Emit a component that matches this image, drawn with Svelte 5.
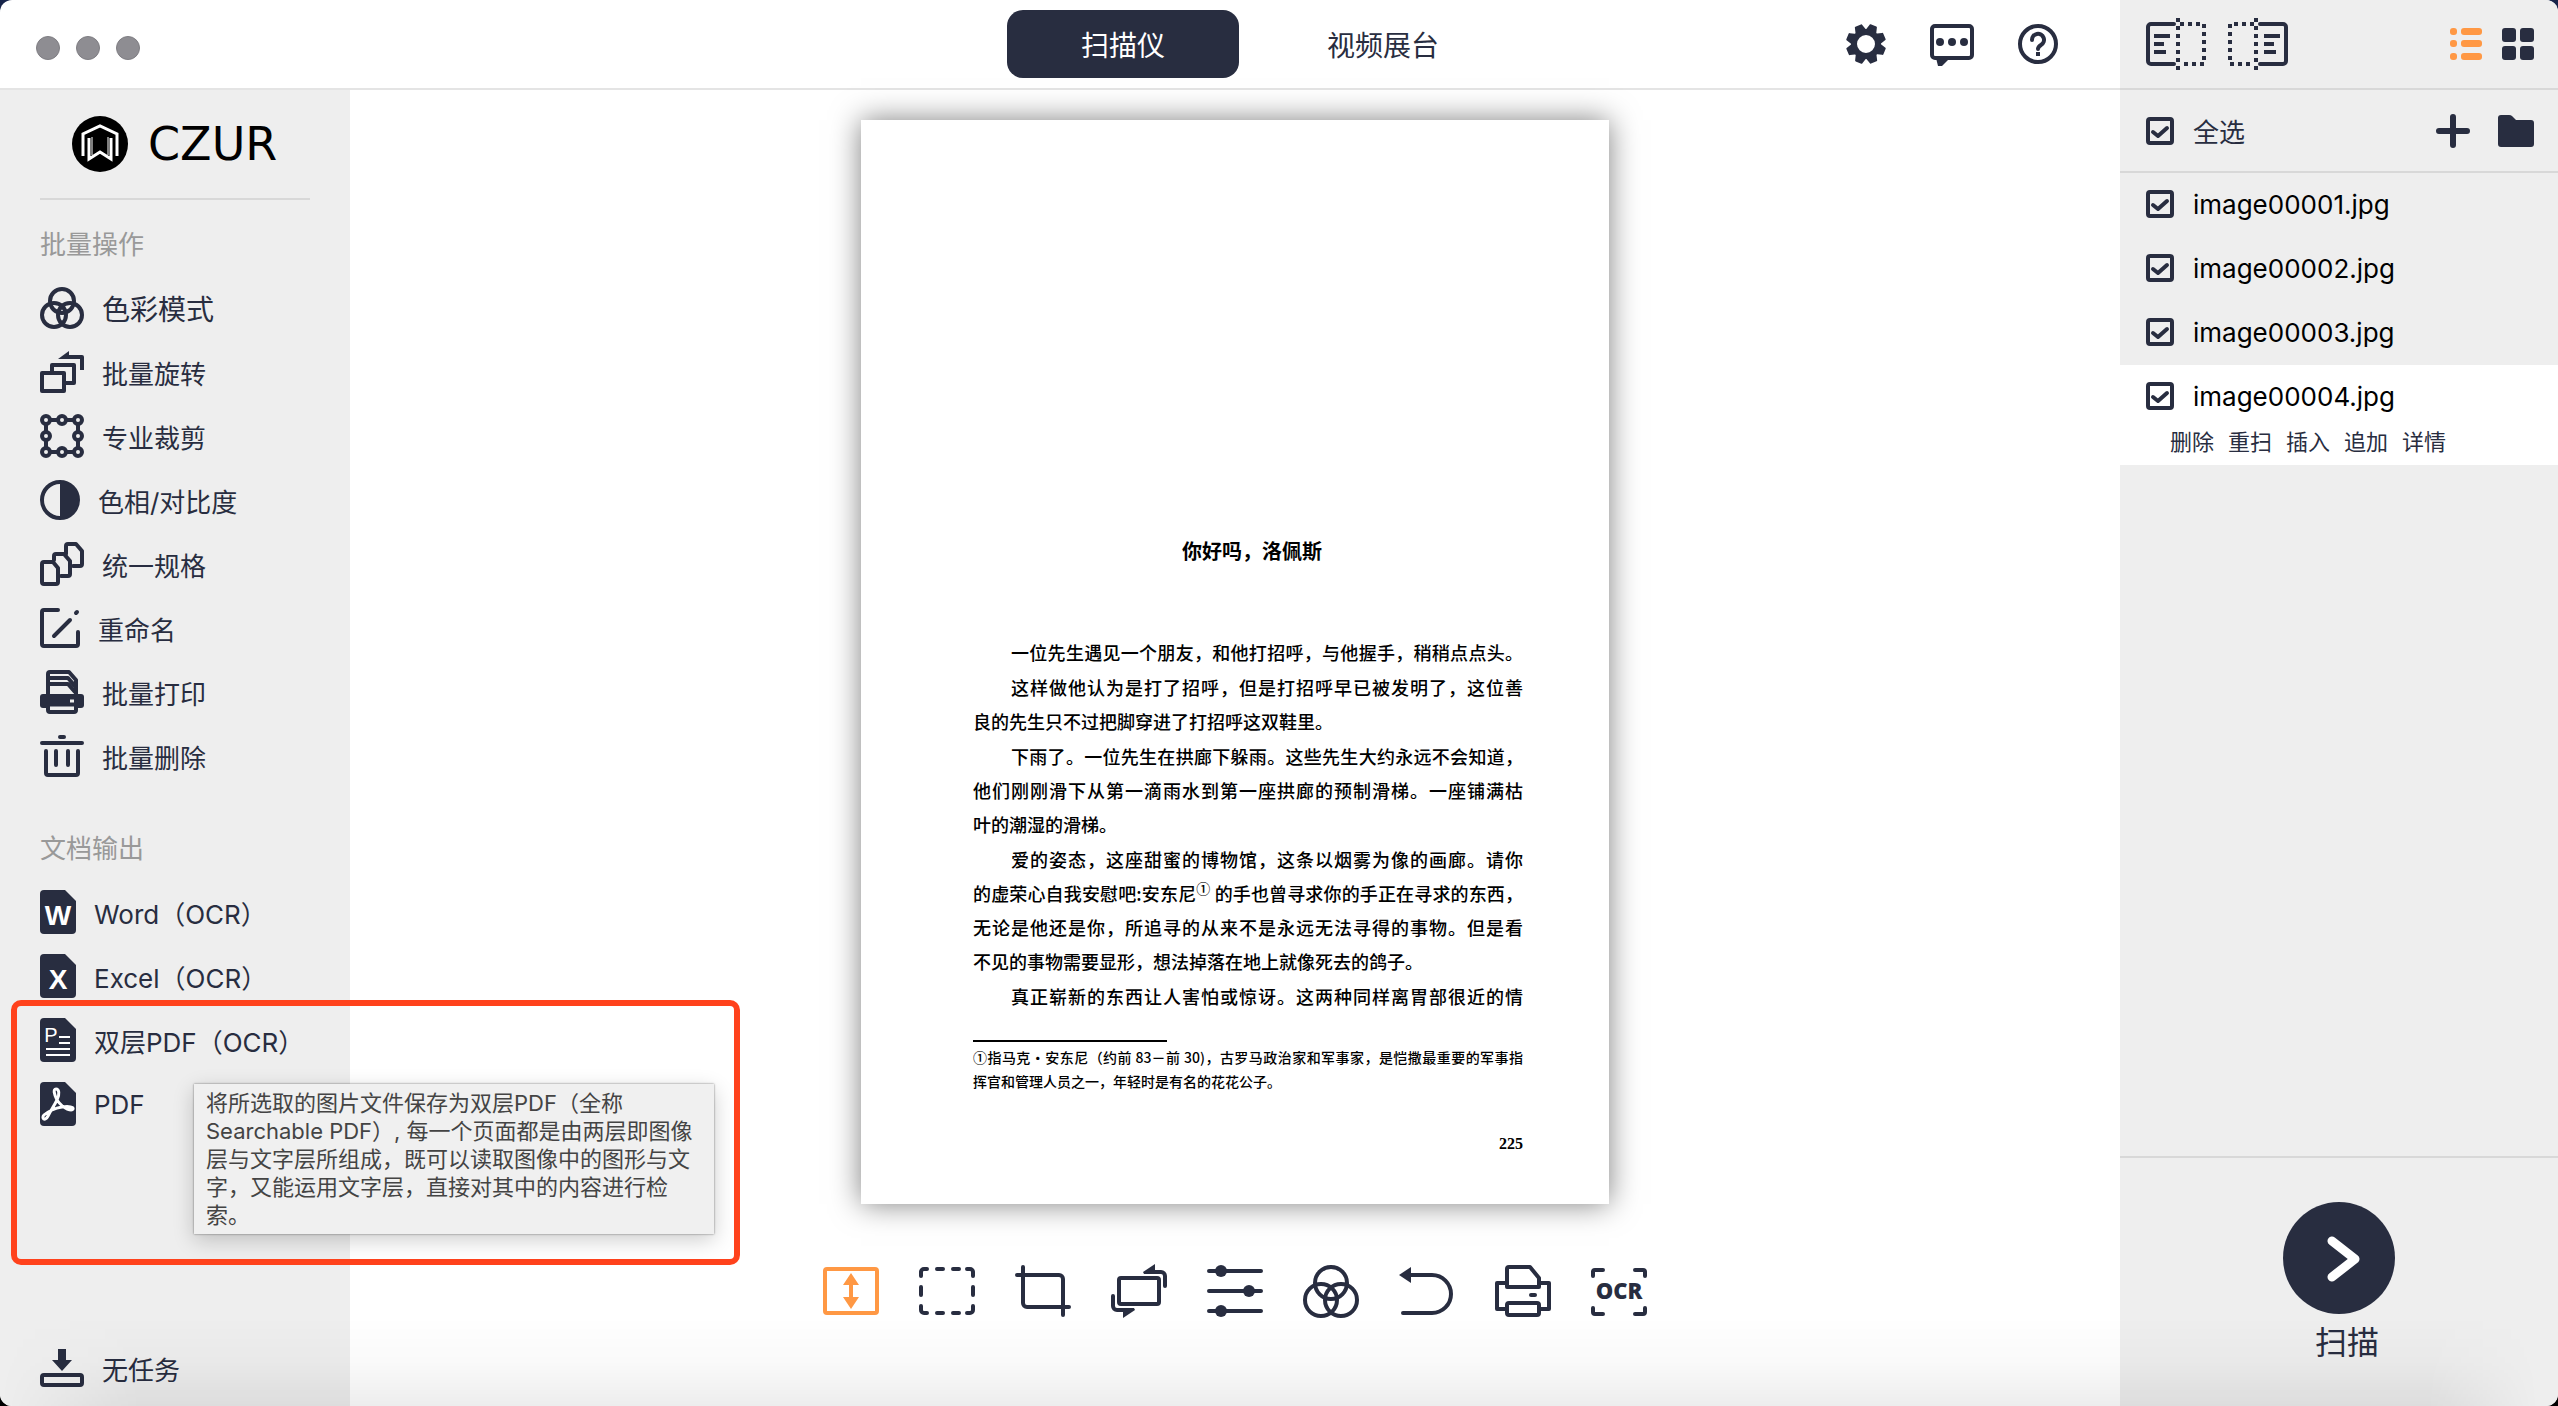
<script>
  const batchItems = [
    { icon: "color", label: "色彩模式", large: true },
    { icon: "rotate", label: "批量旋转" },
    { icon: "nodes", label: "专业裁剪" },
    { icon: "contrast", label: "色相/对比度", width: 40 },
    { icon: "pages", label: "统一规格" },
    { icon: "rename", label: "重命名", width: 40 },
    { icon: "print", label: "批量打印" },
    { icon: "trash", label: "批量删除" }
  ];

  const exportItems = [
    { icon: "word", label: "Word（OCR）" },
    { icon: "excel", label: "Excel（OCR）" },
    { icon: "layered", label: "双层PDF（OCR）" },
    { icon: "pdf", label: "PDF" }
  ];

  const tools = [
    { icon: "fit", label: "适应高度" },
    { icon: "select", label: "选区" },
    { icon: "crop", label: "裁剪" },
    { icon: "turn", label: "旋转" },
    { icon: "sliders", label: "调整" },
    { icon: "color", label: "色彩模式" },
    { icon: "undo", label: "撤销" },
    { icon: "print", label: "打印" },
    { icon: "ocr", label: "OCR" }
  ];

  const tabs = ["扫描仪", "视频展台"];
  let activeTab = tabs[0];

  let files = ["image00001.jpg", "image00002.jpg", "image00003.jpg", "image00004.jpg"].map(
    name => ({ name, checked: true })
  );
  let current = "image00004.jpg";
  const fileActions = ["删除", "重扫", "插入", "追加", "详情"];

  $: allChecked = files.every(file => file.checked);

  const toggleAll = event => {
    const checked = event.target.checked;
    files = files.map(file => ({ ...file, checked }));
  };

  const paragraphs = [
    ["一位先生遇见一个朋友，和他打招呼，与他握手，稍稍点点头。"],
    ["这样做他认为是打了招呼，但是打招呼早已被发明了，这位善", "良的先生只不过把脚穿进了打招呼这双鞋里。"],
    [
      "下雨了。一位先生在拱廊下躲雨。这些先生大约永远不会知道，",
      "他们刚刚滑下从第一滴雨水到第一座拱廊的预制滑梯。一座铺满枯",
      "叶的潮湿的滑梯。"
    ],
    [
      "爱的姿态，这座甜蜜的博物馆，这条以烟雾为像的画廊。请你",
      "的虚荣心自我安慰吧:安东尼<sup>①</sup> 的手也曾寻求你的手正在寻求的东西，",
      "无论是他还是你，所追寻的从来不是永远无法寻得的事物。但是看",
      "不见的事物需要显形，想法掉落在地上就像死去的鸽子。"
    ],
    ["真正崭新的东西让人害怕或惊讶。这两种同样离胃部很近的情"]
  ];

  // a line shorter than this keeps its natural width
  const isFull = line => line.length > 26;

  const teeth = [22, 67, 112, 157, 202, 247, 292, 337];
</script>

<style>
  :global(body) {
    margin: 0;
    background: linear-gradient(#17244a, #000);
  }

  button,
  input {
    margin: 0;
    padding: 0;
    border: 0;
    background: none;
    color: inherit;
    font: inherit;
  }

  svg {
    display: block;
    flex: none;
    overflow: visible;
  }

  .line-icon {
    fill: none;
    stroke: currentColor;
    stroke-width: 4;
    stroke-linecap: round;
    stroke-linejoin: round;
  }

  .solid {
    fill: currentColor;
    stroke: none;
  }

  .dashes {
    stroke-linecap: butt;
    stroke-linejoin: miter;
  }

  .window {
    position: relative;
    display: grid;
    grid-template-columns: minmax(0, 1fr) 438px;
    min-height: 100vh;
    border-radius: 12px;
    overflow: hidden;
    background: #fff;
    color: #282d40;
    font-family: Inter, "Noto Sans CJK SC", sans-serif;
    font-size: 26px;
  }

  /* dock shadow along the lower edge */
  .window::after {
    content: "";
    position: absolute;
    z-index: 2;
    right: 0;
    bottom: 0;
    left: 0;
    height: 90px;
    pointer-events: none;
    background: linear-gradient(transparent, rgba(0, 0, 0, 0.02) 50%, rgba(0, 0, 0, 0.07));
    mask-image: linear-gradient(to right, transparent, #000 140px, #000 calc(100% - 130px), transparent calc(100% - 20px));
  }

  .main {
    display: grid;
    grid-template-columns: 350px minmax(0, 1fr);
    grid-template-rows: 90px 1fr;
  }

  .titlebar {
    grid-column: 1 / 3;
    display: grid;
    grid-template-columns: 350px 1fr;
    box-sizing: border-box;
    border-bottom: 2px solid #e4e4e4;
  }

  .lights {
    display: flex;
    gap: 16px;
    padding: 36px 36px 0;
  }

  .lights span {
    width: 24px;
    height: 24px;
    box-sizing: border-box;
    border: 1px solid #7f7e83;
    border-radius: 50%;
    background: #8e8d92;
  }

  .tabs {
    grid-area: 1 / 2;
    display: flex;
    justify-content: center;
    gap: 28px;
    padding: 10px 0 10px 36px;
  }

  .tabs button {
    width: 232px;
    border-radius: 16px;
    font-size: 28px;
  }

  .tabs .active {
    background: #282d40;
    color: #fff;
  }

  .links {
    grid-area: 1 / 2;
    justify-self: end;
    display: flex;
    align-items: flex-start;
    gap: 44px;
    padding: 24px 62px 0 0;
  }

  .sidebar {
    position: relative;
    z-index: 1;
    display: flex;
    flex-direction: column;
    padding: 0 40px 6px;
    background: #eee;
  }

  .brand {
    display: flex;
    align-items: center;
    gap: 20px;
    height: 108px;
    padding-left: 32px;
    border-bottom: 2px solid #d8d8d8;
    color: #000;
    font-family: "DejaVu Sans", sans-serif;
    font-size: 46px;
  }

  h2 {
    margin: 14px 0 0;
    color: #999;
    font-size: 26px;
    font-weight: 400;
    line-height: 62px;
  }

  .export-title {
    margin-top: 30px;
  }

  .item {
    display: flex;
    align-items: center;
    gap: 18px;
    height: 64px;
    white-space: nowrap;
  }

  .item.large {
    font-size: 28px;
  }

  .tasks {
    margin-top: auto;
  }

  .letter {
    fill: #fff;
    stroke: none;
    font-family: "Liberation Sans", sans-serif;
    font-size: 28px;
    font-weight: 700;
    text-anchor: middle;
  }

  .letter.small {
    font-size: 20px;
    font-weight: 400;
  }

  .cut {
    fill: none;
    stroke: #fff;
    stroke-width: 2;
    stroke-linejoin: round;
  }

  .cut.thick {
    stroke-width: 3;
  }

  .highlight {
    position: absolute;
    top: 910px;
    left: 11px;
    width: 717px;
    height: 253px;
    border: 6px solid #ff421c;
    border-radius: 10px;
    pointer-events: none;
  }

  .tooltip {
    position: absolute;
    top: 994px;
    left: 194px;
    box-sizing: border-box;
    width: 520px;
    padding: 5px 12px;
    background: #f0f0f0;
    box-shadow: 0 0 2px rgba(0, 0, 0, 0.5), 0 6px 20px rgba(0, 0, 0, 0.2);
    color: #444;
    font-size: 22px;
    line-height: 28px;
    white-space: nowrap;
  }

  .canvas {
    display: flex;
    flex-direction: column;
    align-items: center;
    padding: 30px 0 87px;
  }

  .sheet {
    flex: 1;
    min-height: 0;
    aspect-ratio: 187 / 271;
    box-sizing: border-box;
    padding: 0 86px 0 112px;
    background: #fff;
    box-shadow: 0 0 28px rgba(0, 0, 0, 0.5);
    color: #000;
    font-family: "Noto Sans CJK SC", sans-serif;
    font-size: 18px;
    font-weight: 500;
    line-height: 34px;
  }

  .sheet h1 {
    margin: 413px 0 66px 8px;
    font-size: 20px;
    font-weight: 700;
    line-height: 36px;
    text-align: center;
  }

  .sheet p {
    margin: 0 0 1px;
  }

  .sheet span {
    display: block;
    white-space: nowrap;
  }

  .sheet p span:first-child {
    margin-left: 38px;
  }

  .sheet .full {
    text-align: justify;
    text-align-last: justify;
  }

  .sheet :global(sup) {
    font-size: 14px;
    line-height: 0;
  }

  .footnote {
    margin-top: 21px;
    padding-top: 6px;
    font-size: 14px;
    line-height: 24px;
  }

  .footnote::before {
    content: "";
    display: block;
    width: 194px;
    margin-bottom: 3px;
    border-top: 2px solid #000;
  }

  .page-number {
    margin-top: 34px;
    font-family: "Liberation Serif", serif;
    font-size: 16px;
    font-weight: 700;
    text-align: right;
  }

  .toolbar {
    display: flex;
    gap: 40px;
    margin-top: 59px;
  }

  .toolbar .active {
    color: #ff9844;
  }

  .ocr-text {
    fill: currentColor;
    stroke: none;
    font-family: "Open Sans", sans-serif;
    font-size: 22px;
    font-weight: 800;
    text-anchor: middle;
  }

  .panel {
    display: flex;
    flex-direction: column;
    background: #eee;
  }

  .panel-top,
  .panel-select {
    display: flex;
    align-items: center;
    box-sizing: border-box;
    padding: 0 24px 0 26px;
    border-bottom: 2px solid #d8d8d8;
  }

  .panel-top {
    gap: 20px;
    height: 90px;
  }

  .panel-top .list {
    margin-left: auto;
    color: #ff9844;
  }

  .panel-select {
    gap: 28px;
    height: 83px;
  }

  .panel-select label {
    margin-right: auto;
  }

  .page-modes {
    display: flex;
    gap: 22px;
  }

  label {
    display: flex;
    align-items: center;
    gap: 19px;
  }

  input[type="checkbox"] {
    appearance: none;
    flex: none;
    box-sizing: border-box;
    width: 28px;
    height: 28px;
    border: 4px solid #282d40;
    border-radius: 4px;
  }

  input[type="checkbox"]:checked {
    background: url("data:image/svg+xml,%3Csvg xmlns='http://www.w3.org/2000/svg' viewBox='0 0 20 20'%3E%3Cpath d='M3 11l5 4 9-8' fill='none' stroke='%23282d40' stroke-width='4' stroke-linecap='round' stroke-linejoin='round'/%3E%3C/svg%3E");
  }

  .files {
    flex: 1;
    margin: 0;
    padding: 0;
    list-style: none;
  }

  .files li {
    padding-left: 26px;
  }

  .files label {
    height: 62px;
    padding-bottom: 2px;
    color: #000;
  }

  .files .current {
    background: #fff;
  }

  .actions {
    display: flex;
    gap: 14px;
    height: 36px;
    padding-left: 24px;
    font-size: 22px;
    line-height: 26px;
  }

  .actions button {
    height: 26px;
  }

  .scan {
    display: flex;
    flex-direction: column;
    align-items: center;
    box-sizing: border-box;
    height: 250px;
    padding-top: 44px;
    border-top: 2px solid #d8d8d8;
    font-size: 32px;
    line-height: 40px;
  }

  .scan button {
    border-radius: 50%;
  }

  .scan label {
    padding: 9px 0 0 16px;
  }
</style>

<div class="window">
  <div class="main">
    <header class="titlebar">
      <div class="lights"><span></span><span></span><span></span></div>
      <nav class="tabs">
        {#each tabs as tab}
          <button class:active={tab === activeTab} on:click={() => (activeTab = tab)}>{tab}</button>
        {/each}
      </nav>
      <div class="links">
        <button aria-label="设置">
          <svg width="40" height="40" viewBox="0 0 40 40">
            {#each teeth as angle}
              <path class="solid" d="M14 8L16 1Q16 0 17 0H23Q24 0 24 1L26 8z" transform="rotate({angle} 20 20)" />
            {/each}
            <circle cx="20" cy="20" r="12" fill="none" stroke="currentColor" stroke-width="6" />
          </svg>
        </button>
        <button aria-label="反馈">
          <svg class="line-icon" width="44" height="42" viewBox="0 0 44 42">
            <rect x="2" y="2" width="40" height="32" rx="3" />
            <path class="solid" d="M6 34h14l-8 8h-4z" />
            <circle class="solid" cx="10" cy="18" r="4" />
            <circle class="solid" cx="22" cy="18" r="4" />
            <circle class="solid" cx="34" cy="18" r="4" />
          </svg>
        </button>
        <button aria-label="帮助">
          <svg class="line-icon" width="40" height="40" viewBox="0 0 40 40">
            <circle cx="20" cy="20" r="18" />
            <path d="M14 16a6 6 0 1 1 9 5q-3 2-3 4" />
            <path class="solid" d="M18 28h4v4h-4z" />
          </svg>
        </button>
      </div>
    </header>

    <aside class="sidebar">
      <div class="brand">
        <svg width="56" height="56" viewBox="0 0 56 56">
          <circle cx="28" cy="28" r="28" />
          <g fill="none" stroke="#fff" stroke-width="3">
            <path d="M11 40V18L28 10l17 8v22" />
            <path d="M17 22v21l11-7 11 7V22" />
            <path d="M20 21v18M36 21v18" stroke-width="1" />
          </g>
        </svg>
        <span>CZUR</span>
      </div>

      <h2>批量操作</h2>
      {#each batchItems as item}
        <button class="item" class:large={item.large}>
          <svg class="line-icon" width={item.width || 44} height={item.width || 44} viewBox="0 0 {item.width || 44} {item.width || 44}">
            {#if item.icon === "color"}
              <circle cx="22" cy="15" r="12" />
              <circle cx="14" cy="29" r="12" />
              <circle cx="30" cy="29" r="12" />
            {:else if item.icon === "rotate"}
              <rect x="2" y="23" width="22" height="18" />
              <path d="M12 22v-7h22v18h-9M28 7h14v13" stroke-linecap="butt" />
              <path class="solid" d="M18 9L29 1v8z" />
            {:else if item.icon === "nodes"}
              <path d="M10 6h8M26 6h8M10 38h8M26 38h8M6 10v8M6 26v8M38 10v8M38 26v8" />
              {#each [[6, 6], [22, 6], [38, 6], [6, 22], [38, 22], [6, 38], [22, 38], [38, 38]] as [x, y]}
                <circle cx={x} cy={y} r="4" />
              {/each}
            {:else if item.icon === "contrast"}
              <circle cx="20" cy="20" r="18" />
              <path class="solid" d="M20 2a18 18 0 0 1 0 36z" />
            {:else if item.icon === "pages"}
              <path d="M4 20h9l5 6v14a2 2 0 0 1-2 2H4a2 2 0 0 1-2-2V22a2 2 0 0 1 2-2z" />
              <path d="M14 18v-4a2 2 0 0 1 2-2h8l6 7v13a2 2 0 0 1-2 2h-7" />
              <path d="M26 12V4a2 2 0 0 1 2-2h8l6 7v13a2 2 0 0 1-2 2h-7" />
            {:else if item.icon === "rename"}
              <path d="M18 2H4a2 2 0 0 0-2 2v32a2 2 0 0 0 2 2h32a2 2 0 0 0 2-2V24M14 28l16-16M36 5l1-1" />
            {:else if item.icon === "print"}
              <path d="M8 26V4a2 2 0 0 1 2-2h19l7 8v16M10 8h18l7 8M10 14h18l7 8" />
              <rect class="solid" y="24" width="44" height="14" rx="3" />
              <path d="M8 34h28v6a2 2 0 0 1-2 2H10a2 2 0 0 1-2-2z" />
              <path d="M10 38h24M30 31h4" stroke="#eee" stroke-linecap="butt" stroke-width="3" />
            {:else}
              <path d="M20 3h4M2 9h40M6 17v22a2 2 0 0 0 2 2h28a2 2 0 0 0 2-2V17M16 17v14M28 17v14" />
            {/if}
          </svg>
          {item.label}
        </button>
      {/each}

      <h2 class="export-title">文档输出</h2>
      {#each exportItems as item}
        <button class="item">
          <svg width="36" height="44" viewBox="0 0 36 44">
            <path class="solid" d="M4 0h21l11 11v29a4 4 0 0 1-4 4H4a4 4 0 0 1-4-4V4a4 4 0 0 1 4-4z" />
            {#if item.icon === "word"}
              <text class="letter" x="18" y="35">W</text>
            {:else if item.icon === "excel"}
              <text class="letter" x="18" y="35">X</text>
            {:else if item.icon === "layered"}
              <text class="letter small" x="11" y="24">P</text>
              <path class="cut" d="M19 19h11M19 25h11M6 31h24M6 37h24" />
            {:else}
              <path class="cut thick" d="M17 18C14 12 13 7 16 7s4 5 1 11-6 10-9 16-7 2-4-1 11-7 18-8 12 0 11 2-9 1-16-9z" />
            {/if}
          </svg>
          {item.label}
        </button>
      {/each}

      <button class="item tasks">
        <svg class="line-icon" width="44" height="38" viewBox="0 0 44 38">
          <path class="solid" d="M18 0h8v11h6L22 22 12 11h6z" />
          <rect x="2" y="26" width="40" height="10" rx="2" />
        </svg>
        无任务
      </button>

      <div class="highlight"></div>
      <div class="tooltip" role="tooltip">
        将所选取的图片文件保存为双层PDF（全称<br />
        Searchable PDF）, 每一个页面都是由两层即图像<br />
        层与文字层所组成，既可以读取图像中的图形与文<br />
        字，又能运用文字层，直接对其中的内容进行检<br />
        索。
      </div>
    </aside>

    <main class="canvas">
      <article class="sheet">
        <h1>你好吗，洛佩斯</h1>
        {#each paragraphs as lines}
          <p>
            {#each lines as line}
              <span class:full={isFull(line)}>{@html line}</span>
            {/each}
          </p>
        {/each}
        <div class="footnote">
          <span class="full">①指马克·安东尼（约前 83－前 30)，古罗马政治家和军事家，是恺撒最重要的军事指</span>
          <span>挥官和管理人员之一，年轻时是有名的花花公子。</span>
        </div>
        <div class="page-number">225</div>
      </article>

      <div class="toolbar">
        {#each tools as tool}
          <button class:active={tool.icon === "fit"} aria-label={tool.label}>
            <svg class="line-icon" width="56" height="56" viewBox="0 0 56 56">
              {#if tool.icon === "fit"}
                <rect x="2" y="6" width="52" height="44" rx="2" />
                <path class="solid" d="M28 10l8 12h-6v12h6l-8 12-8-12h6V22h-6z" />
              {:else if tool.icon === "select"}
                <path d="M2 13V9a3 3 0 0 1 3-3h3M48 6h3a3 3 0 0 1 3 3v4M54 43v4a3 3 0 0 1-3 3h-3M8 50H5a3 3 0 0 1-3-3v-4" />
                <path d="M18 6h6M34 6h6M18 50h6M34 50h6M2 24v8M54 24v8" />
              {:else if tool.icon === "crop"}
                <path d="M8 4v36a4 4 0 0 0 4 4h42M2 12h42a4 4 0 0 1 4 4v36" />
              {:else if tool.icon === "turn"}
                <rect x="8" y="15" width="40" height="26" rx="2" />
                <path d="M40 9h10a4 4 0 0 1 4 4v10M2 33v10a4 4 0 0 0 4 4h10" />
                <path class="solid" d="M32 9L44 1v10H33zM24 47l-12 8V45h11z" />
              {:else if tool.icon === "sliders"}
                <path d="M2 8h52M2 28h52M2 48h52" />
                <circle class="solid" cx="14" cy="8" r="6" />
                <circle class="solid" cx="42" cy="28" r="6" />
                <circle class="solid" cx="14" cy="48" r="6" />
              {:else if tool.icon === "color"}
                <circle cx="28" cy="20" r="16" />
                <circle cx="18" cy="37" r="16" />
                <circle cx="38" cy="37" r="16" />
              {:else if tool.icon === "undo"}
                <path d="M10 12h23a19 19 0 0 1 0 38H4" />
                <path class="solid" d="M0 12l12-8v16z" />
              {:else if tool.icon === "print"}
                <path d="M12 24V6a2 2 0 0 1 2-2h21l9 11v9zM12 20H2v26h10M44 20h10v26H44" />
                <rect x="12" y="40" width="32" height="12" rx="2" />
                <path d="M36 32h4" />
              {:else}
                <path d="M2 13V9a2 2 0 0 1 2-2h8M44 7h8a2 2 0 0 1 2 2v4M54 45v4a2 2 0 0 1-2 2h-8M12 51H4a2 2 0 0 1-2-2v-4" />
                <text class="ocr-text" x="28" y="36">OCR</text>
              {/if}
            </svg>
          </button>
        {/each}
      </div>
    </main>
  </div>

  <aside class="panel">
    <div class="panel-top">
      <div class="page-modes">
        <button aria-label="左页">
          <svg class="line-icon" width="60" height="52" viewBox="0 0 60 52">
            <path d="M28 6H5a3 3 0 0 0-3 3v34a3 3 0 0 0 3 3h23" />
            <g class="dashes">
              <path d="M8 18h16M8 26h10M8 34h12" />
              <path d="M32 0v52M34 6h24v40H34" stroke-dasharray="4 4" />
            </g>
          </svg>
        </button>
        <button aria-label="右页">
          <svg class="line-icon" width="60" height="52" viewBox="0 0 60 52">
            <path d="M32 6h23a3 3 0 0 1 3 3v34a3 3 0 0 1-3 3H32" />
            <g class="dashes">
              <path d="M36 18h16M36 26h10M36 34h12" />
              <path d="M28 0v52M26 6H2v40h24" stroke-dasharray="4 4" />
            </g>
          </svg>
        </button>
      </div>
      <button class="list" aria-label="列表">
        <svg width="32" height="32" viewBox="0 0 32 32">
          {#each [0, 12, 25] as y}
            <rect class="solid" {y} width="7" height="7" rx="3" />
            <rect class="solid" x="11" {y} width="21" height="7" rx="3" />
          {/each}
        </svg>
      </button>
      <button aria-label="缩略图">
        <svg width="32" height="32" viewBox="0 0 32 32">
          {#each [[0, 0], [18, 0], [0, 18], [18, 18]] as [x, y]}
            <rect class="solid" {x} {y} width="14" height="14" rx="3" />
          {/each}
        </svg>
      </button>
    </div>

    <div class="panel-select">
      <label><input type="checkbox" checked={allChecked} on:change={toggleAll} />全选</label>
      <button aria-label="添加">
        <svg class="line-icon" width="34" height="34" viewBox="0 0 34 34">
          <path d="M17 3v28M3 17h28" stroke-width="6" />
        </svg>
      </button>
      <button aria-label="文件夹">
        <svg width="36" height="32" viewBox="0 0 36 32">
          <path class="solid" d="M3 0h8q2 0 3 1l4 4h15a3 3 0 0 1 3 3v21a3 3 0 0 1-3 3H3a3 3 0 0 1-3-3V3a3 3 0 0 1 3-3z" />
        </svg>
      </button>
    </div>

    <ul class="files">
      {#each files as file}
        <li class:current={file.name === current}>
          <label><input type="checkbox" bind:checked={file.checked} />{file.name}</label>
          {#if file.name === current}
            <div class="actions">
              {#each fileActions as action}
                <button>{action}</button>
              {/each}
            </div>
          {/if}
        </li>
      {/each}
    </ul>

    <div class="scan">
      <button id="scan" aria-label="扫描">
        <svg width="112" height="112" viewBox="0 0 112 112">
          <circle class="solid" cx="56" cy="56" r="56" />
          <path d="M49 39l23 18-23 18" fill="none" stroke="#fff" stroke-width="9" stroke-linecap="round" stroke-linejoin="round" />
        </svg>
      </button>
      <label for="scan">扫描</label>
    </div>
  </aside>
</div>
